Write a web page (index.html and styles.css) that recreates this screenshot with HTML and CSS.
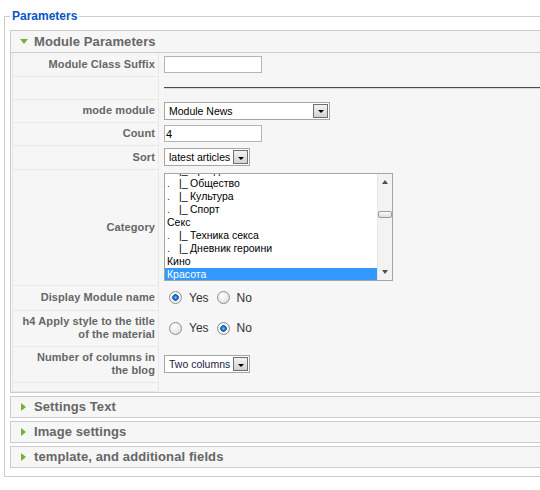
FILE: index.html
```html
<!DOCTYPE html>
<html lang="en">
<head>
  <meta charset="UTF-8">
  <title>Module Parameters</title>
  <link rel="stylesheet" href="styles.css">
</head>
<body>

  <fieldset class="params">
    <legend>Parameters</legend>

    <div class="pane open">
      <h3 class="pane-title"><span class="arrow-down"></span>Module Parameters</h3>
      <table class="paramlist">
        <tr class="row-std">
          <td class="key">Module Class Suffix</td>
          <td class="value"><input class="textbox" type="text" value=""></td>
        </tr>
        <tr class="row-std">
          <td class="key"></td>
          <td class="value"><div class="spacer-line"></div></td>
        </tr>
        <tr class="row-std">
          <td class="key">mode module</td>
          <td class="value">
            <div class="select select-wide">
              <span class="select-text">Module News</span>
              <span class="select-btn"></span>
            </div>
          </td>
        </tr>
        <tr class="row-std">
          <td class="key">Count</td>
          <td class="value"><input class="textbox" type="text" value="4"></td>
        </tr>
        <tr class="row-sort">
          <td class="key">Sort</td>
          <td class="value">
            <div class="select">
              <span class="select-text">latest articles</span>
              <span class="select-btn"></span>
            </div>
          </td>
        </tr>
        <tr class="row-list">
          <td class="key">Category</td>
          <td class="value">
            <div class="listbox">
              <div class="options">
                <div class="opt"><span class="dot">.</span><span class="branch">|_</span>Праздники</div>
                <div class="opt"><span class="dot">.</span><span class="branch">|_</span>Общество</div>
                <div class="opt"><span class="dot">.</span><span class="branch">|_</span>Культура</div>
                <div class="opt"><span class="dot">.</span><span class="branch">|_</span>Спорт</div>
                <div class="opt">Секс</div>
                <div class="opt"><span class="dot">.</span><span class="branch">|_</span>Техника секса</div>
                <div class="opt"><span class="dot">.</span><span class="branch">|_</span>Дневник героини</div>
                <div class="opt">Кино</div>
                <div class="opt selected">Красота</div>
              </div>
              <div class="scrollbar">
                <span class="scroll-btn up"></span>
                <span class="scroll-track"><span class="scroll-thumb"></span></span>
                <span class="scroll-btn down"></span>
              </div>
            </div>
          </td>
        </tr>
        <tr class="row-radio">
          <td class="key">Display Module name</td>
          <td class="value">
            <div class="choices">
              <label class="choice"><span class="radio checked"></span>Yes</label>
              <label class="choice"><span class="radio"></span>No</label>
            </div>
          </td>
        </tr>
        <tr class="row-tall">
          <td class="key">h4 Apply style to the title<br>of the material</td>
          <td class="value">
            <div class="choices">
              <label class="choice"><span class="radio"></span>Yes</label>
              <label class="choice"><span class="radio checked"></span>No</label>
            </div>
          </td>
        </tr>
        <tr class="row-tall">
          <td class="key">Number of columns in<br>the blog</td>
          <td class="value">
            <div class="select">
              <span class="select-text dark">Two columns</span>
              <span class="select-btn"></span>
            </div>
          </td>
        </tr>
        <tr class="row-end">
          <td class="key"></td>
          <td class="value"></td>
        </tr>
      </table>
    </div>

    <div class="pane">
      <h3 class="pane-title"><span class="arrow-right"></span>Settings Text</h3>
    </div>
    <div class="pane">
      <h3 class="pane-title"><span class="arrow-right"></span>Image settings</h3>
    </div>
    <div class="pane">
      <h3 class="pane-title"><span class="arrow-right"></span>template, and additional fields</h3>
    </div>
  </fieldset>

</body>
</html>
```

FILE: styles.css
```css
* {
  box-sizing: border-box;
}

html,
body {
  overflow: hidden;
}

body {
  margin: 0;
  width: 640px;
  background: #fff;
  color: #333;
  font-family: "Liberation Sans", Arial, sans-serif;
  font-size: 11px;
}

/* fieldset */
.params {
  margin: 9px 0 0 4px;
  padding: 7px 5px 8px;
  width: 620px;
  border: 1px solid #ccc;
}

.params legend {
  padding: 0 2px;
  color: #0b55c4;
  font-size: 12px;
  font-weight: bold;
  line-height: 14px;
}

/* sliding panes */
.pane {
  border: 1px solid #ccc;
  background: #f6f6f6;
  margin-bottom: 3px;
}

.pane:last-child {
  margin-bottom: 0;
}

.pane-title {
  display: flex;
  align-items: center;
  height: 20px;
  margin: 0;
  padding-left: 9px;
  color: #666;
  font-size: 13px;
  font-weight: bold;
  letter-spacing: 0.1px;
}

.pane.open .pane-title {
  height: 22px;
  border-bottom: 1px solid #ccc;
}

.arrow-down {
  margin-right: 6px;
  border-left: 4px solid transparent;
  border-right: 4px solid transparent;
  border-top: 5px solid #74b32f;
}

.arrow-right {
  margin: 0 8px 0 1px;
  border-top: 4px solid transparent;
  border-bottom: 4px solid transparent;
  border-left: 5px solid #74b32f;
}

/* param list */
.paramlist {
  width: calc(100% - 2px);
  margin: 0 1px;
  border-collapse: collapse;
}

.paramlist td {
  vertical-align: middle;
}

.key {
  width: 146px;
  padding: 2px 3px 2px 2px;
  background: #f6f6f6;
  border: 1px solid #e9e9e9;
  border-top: 0;
  color: #666;
  font-weight: bold;
  line-height: 13px;
  letter-spacing: 0.1px;
  text-align: right;
  white-space: nowrap;
}

.value {
  padding: 0 0 0 5px;
}

.row-std td { height: 23px; }
.row-sort td { height: 24px; }
.row-list td { height: 116px; }
.row-radio td { height: 25px; }
.row-tall td { height: 36px; }
.row-end td { height: 9px; }

.textbox {
  display: block;
  width: 98px;
  height: 17px;
  margin: 0;
  padding: 0 1px;
  border: 1px solid #b5b5b5;
  background: #fff;
  color: #000;
  font-family: "Liberation Sans", Arial, sans-serif;
  font-size: 11px;
  outline: none;
}

.spacer-line {
  border-top: 1px solid #4a4a4a;
  border-bottom: 1px solid #d8d8d8;
}

/* dropdowns */
.select {
  display: flex;
  align-items: center;
  width: 86px;
  height: 18px;
  padding: 0 1px 0 4px;
  border: 1px solid #a5a5a5;
  background: #fff;
}

.select-wide {
  width: 166px;
}

.select-text {
  flex: 1;
  color: #000;
  font-size: 10.5px;
  white-space: nowrap;
  overflow: hidden;
}

.select-text.dark {
  color: #1e1a3a;
}

.select-btn {
  display: flex;
  align-items: center;
  justify-content: center;
  flex: none;
  width: 15px;
  height: 14px;
  border: 1px solid #6f6f6f;
  background: linear-gradient(#f2f2f2, #d2d2d2);
}

.select-btn::after {
  content: "";
  margin-top: 2px;
  border-left: 3px solid transparent;
  border-right: 3px solid transparent;
  border-top: 3px solid #000;
}

/* category list */
.listbox {
  display: flex;
  width: 229px;
  height: 108px;
  border: 1px solid #a5a5a5;
  background: #fff;
}

.options {
  flex: 1;
  overflow: hidden;
}

.options .opt:first-child {
  margin-top: -10px;
}

.opt {
  height: 13px;
  padding-left: 2px;
  color: #000;
  font-size: 10.5px;
  line-height: 13px;
  white-space: nowrap;
}

.opt.selected {
  background: #3399ff;
  color: #fff;
}

.dot {
  display: inline-block;
  width: 12px;
  color: #333;
}

.branch {
  display: inline-block;
  width: 11px;
}

.scrollbar {
  display: flex;
  flex-direction: column;
  width: 15px;
  background: #f3f3f3;
  border-left: 1px solid #e6e6e6;
}

.scroll-btn {
  display: flex;
  align-items: center;
  justify-content: center;
  height: 16px;
}

.scroll-btn.up::after {
  content: "";
  border-left: 3px solid transparent;
  border-right: 3px solid transparent;
  border-bottom: 4px solid #505050;
}

.scroll-btn.down::after {
  content: "";
  border-left: 3px solid transparent;
  border-right: 3px solid transparent;
  border-top: 4px solid #505050;
}

.scroll-track {
  flex: 1;
}

.scroll-thumb {
  display: block;
  height: 7px;
  margin: 21px 0 0 0;
  border: 1px solid #9a9a9a;
  border-radius: 2px;
  background: linear-gradient(#fbfbfb, #dcdcdc);
}

/* radios */
.choices {
  display: flex;
  align-items: center;
  gap: 8px;
  padding-left: 5px;
}

.choice {
  display: flex;
  align-items: center;
  gap: 7px;
  color: #333;
  font-size: 12px;
}

.radio {
  width: 13px;
  height: 13px;
  border: 1px solid #8e8f8f;
  border-radius: 50%;
  background: radial-gradient(circle at 40% 35%, #fff 0, #f0f0f0 40%, #d4d4d4 100%);
}

.radio.checked {
  background: radial-gradient(circle at 50% 50%, #8cc8f4 0, #2a7ed0 1.5px, #1a5ca8 3px, #f6f6f6 3.6px, #e4e4e4 100%);
}
```
